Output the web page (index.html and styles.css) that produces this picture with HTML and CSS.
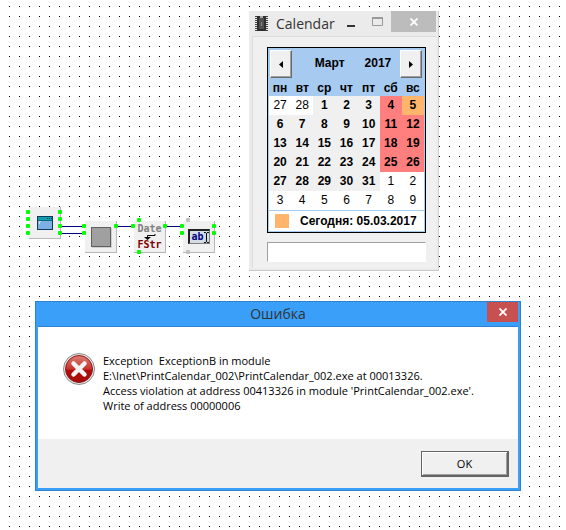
FILE: index.html
```
<!DOCTYPE html>
<html lang="ru">
<head>
    <meta charset="UTF-8">
    <meta name="viewport" content="width=device-width, initial-scale=1.0">
    <title>Calendar</title>
    <link rel="stylesheet" href="styles.css">
</head>
<body>
    <main class="desktop">
        <!-- Wires between the components -->
        <svg class="wires" width="200" height="60" viewBox="20 200 200 60" shape-rendering="crispEdges" aria-hidden="true">
            <path d="M60 226.500H84M60 233.500H84M116 226.500H133M165 226.500H182" stroke="#000080" fill="none"/>
        </svg>

        <div class="node node-form">
            <svg class="node-icon" width="16" height="14" viewBox="0 0 16 14" aria-hidden="true">
                <rect x=".5" y=".5" width="15" height="13" fill="#7db0e4" stroke="#123a5c"/>
                <rect x="1" y="1" width="14" height="3" fill="#12a0b0"/>
                <path d="M10 2.500h1M12 2.500h1M14 2.500h1" stroke="#064a58"/>
                <path d="M1 4.500h14" stroke="#0a6878"/>
                <path d="M2 5.500h2M2.500 5v3" stroke="#c4e2fa"/>
            </svg>
            <i class="pin l p1"></i><i class="pin l p2"></i><i class="pin l p3"></i><i class="pin l p4"></i>
            <i class="pin r p1"></i><i class="pin r p2"></i><i class="pin r p3"></i><i class="pin r p4"></i>
        </div>

        <div class="node node-button">
            <span class="square"></span>
            <i class="pin l p1"></i><i class="pin l p2"></i><i class="pin r p1"></i>
        </div>

        <div class="node node-date">
            <span class="date-text">Date</span>
            <svg width="12" height="6" viewBox="0 0 12 6" aria-hidden="true">
                <path d="M11 0v1.500H3.500V4" fill="none" stroke="#000"/>
                <path d="M0 3h7L3.500 6z"/>
            </svg>
            <span class="fstr-text">FStr</span>
            <i class="pin t"></i><i class="pin l p1"></i><i class="pin r p1"></i><i class="pin b"></i>
        </div>

        <div class="node node-edit">
            <span class="edit-box">ab<svg width="5" height="11" viewBox="0 0 5 11" aria-hidden="true"><path d="M0 .5h2M3 .5h2M2.500 1v9M0 10.500h2M3 10.500h2" stroke="#000"/></svg></span>
            <i class="pin t off"></i><i class="pin b off"></i>
            <i class="pin l p1"></i><i class="pin l p2"></i><i class="pin r p1"></i><i class="pin r p2"></i>
        </div>

        <section class="window">
            <header class="window-title">
                <svg class="chip" width="13" height="15" viewBox="0 0 13 15" aria-hidden="true">
                    <path d="M1 0v15M12 0v15" stroke="#444" stroke-width="2" stroke-dasharray="1 1"/>
                    <rect x="2" y="0" width="9" height="15" fill="#2e2e2e"/>
                    <rect x="4" y="2" width="5" height="11" fill="#505050"/>
                    <path d="M5 0h3v2H5z" fill="#aaa"/>
                    <path d="M6 6h1v4H6z" fill="#888"/>
                </svg>
                <h1>Calendar</h1>
                <button class="win-btn" aria-label="Свернуть">
                    <svg width="8" height="10" viewBox="0 0 8 10"><path d="M0 8h8v2H0z" fill="#333"/></svg>
                </button>
                <button class="win-btn" aria-label="Развернуть">
                    <svg width="11" height="9" viewBox="0 0 11 9"><path d="M.5 1.500h10v7H.5z" fill="none" stroke="#999"/><path d="M0 0h11v2H0z" fill="#999"/></svg>
                </button>
                <button class="win-btn win-close" aria-label="Закрыть">
                    <svg width="8" height="8" viewBox="0 0 8 8"><path d="M.5 .5l7 7M7.500 .5l-7 7" stroke="#fff" stroke-width="1.800"/></svg>
                </button>
            </header>
            <div class="window-body">
                <div class="calendar">
                    <div class="cal-head">
                        <button class="cal-nav" aria-label="Назад">
                            <svg width="4" height="7" viewBox="0 0 4 7"><path d="M4 0v7L0 3.500z"/></svg>
                        </button>
                        <span class="cal-month"><span>Март</span><span>2017</span></span>
                        <button class="cal-nav" aria-label="Вперёд">
                            <svg width="4" height="7" viewBox="0 0 4 7"><path d="M0 0v7L4 3.500z"/></svg>
                        </button>
                    </div>
                    <table>
                        <thead>
                            <tr><th>пн</th><th>вт</th><th>ср</th><th>чт</th><th>пт</th><th>сб</th><th>вс</th></tr>
                        </thead>
                        <tbody>
                            <tr><td class="other">27</td><td class="other">28</td><td>1</td><td>2</td><td>3</td><td class="weekend">4</td><td class="today">5</td></tr>
                            <tr><td>6</td><td>7</td><td>8</td><td>9</td><td>10</td><td class="weekend">11</td><td class="weekend">12</td></tr>
                            <tr><td>13</td><td>14</td><td>15</td><td>16</td><td>17</td><td class="weekend">18</td><td class="weekend">19</td></tr>
                            <tr><td>20</td><td>21</td><td>22</td><td>23</td><td>24</td><td class="weekend">25</td><td class="weekend">26</td></tr>
                            <tr><td>27</td><td>28</td><td>29</td><td>30</td><td>31</td><td class="other">1</td><td class="other">2</td></tr>
                            <tr><td class="other">3</td><td class="other">4</td><td class="other">5</td><td class="other">6</td><td class="other">7</td><td class="other">8</td><td class="other">9</td></tr>
                        </tbody>
                    </table>
                    <div class="cal-today"><span class="swatch"></span>Сегодня: 05.03.2017</div>
                </div>
                <input class="edit" type="text" aria-label="Дата">
            </div>
        </section>

        <section class="dialog" role="alertdialog" aria-labelledby="dialog-title">
            <header class="dialog-title">
                <h2 id="dialog-title">Ошибка</h2>
                <button class="dialog-close" aria-label="Закрыть">
                    <svg width="8" height="8" viewBox="0 0 8 8"><path d="M.5 .5l7 7M7.500 .5l-7 7" stroke="#fff" stroke-width="1.800"/></svg>
                </button>
            </header>
            <div class="dialog-body">
                <svg class="error-icon" width="32" height="32" viewBox="0 0 32 32" aria-hidden="true">
                    <defs>
                        <linearGradient id="red" x1="0" y1="0" x2="0" y2="1">
                            <stop offset="0" stop-color="#dc8078"/>
                            <stop offset=".5" stop-color="#c8322c"/>
                            <stop offset=".55" stop-color="#b00c0c"/>
                            <stop offset="1" stop-color="#a80a0a"/>
                        </linearGradient>
                    </defs>
                    <circle cx="16" cy="16" r="15.500" fill="#e8e8e8" stroke="#8c8c8c"/>
                    <circle cx="16" cy="16" r="13.500" fill="url(#red)" stroke="#8e1a18"/>
                    <path d="M10.500 10.500l11 11M21.500 10.500l-11 11" stroke="#f4f4f4" stroke-width="4.500" stroke-linecap="round"/>
                </svg>
                <p>Exception&nbsp; ExceptionB in module<br>E:\Inet\PrintCalendar_002\PrintCalendar_002.exe at 00013326.<br>Access violation at address 00413326 in module 'PrintCalendar_002.exe'.<br>Write of address 00000006</p>
            </div>
            <footer class="dialog-footer">
                <button class="ok">OK</button>
            </footer>
        </section>
    </main>
</body>
</html>
```
FILE: styles.css
```
* {
    box-sizing: border-box;
    margin: 0;
    padding: 0;
}

body {
    font-family: "Open Sans", "Noto Sans", sans-serif;
    color: #000;
}

button {
    display: flex;
    align-items: center;
    justify-content: center;
    border: 0;
    background: none;
    font-family: inherit;
}

.desktop {
    position: relative;
    min-height: 100vh;
    overflow: hidden;
    background-color: #fff;
    background-image:
        linear-gradient(#fff 9px, transparent 9px),
        linear-gradient(90deg, #fff 9px, #000 9px);
    background-size: 10px 10px;
    background-position: 0 -3px;
}

/* Components on the canvas */
.wires {
    position: absolute;
    left: 20px;
    top: 200px;
}

.node {
    position: absolute;
    top: 221px;
    width: 32px;
    height: 32px;
    display: flex;
    flex-direction: column;
    align-items: center;
    justify-content: center;
    background: #f0f0f0;
    border-right: 1px solid #b8b8b8;
    border-bottom: 1px solid #b8b8b8;
    font-family: "DejaVu Sans Mono", monospace;
    font-size: 10px;
    font-weight: bold;
    line-height: 10px;
}

.node-form {
    left: 29px;
    top: 207px;
}

.node-button {
    left: 85px;
}

.node-date {
    left: 134px;
}

.node-edit {
    left: 183px;
}

.pin {
    position: absolute;
    width: 4px;
    height: 4px;
    border-radius: 1px;
    background: #00ff00;
}

.pin.off {
    background: #c0c0c0;
}

.l { left: -3px; }
.r { left: 29px; }
.p1 { top: 3px; }
.p2 { top: 10px; }
.p3 { top: 17px; }
.p4 { top: 24px; }
.t { left: 3px; top: -3px; }
.b { left: 3px; top: 29px; }

.square {
    width: 20px;
    height: 20px;
    background: #a0a0a0;
    border: 1px solid #606060;
    box-shadow: 1px 1px 0 #d0d0d0;
}

.date-text {
    color: #808080;
}

.fstr-text {
    color: #800000;
}

.edit-box {
    display: flex;
    align-items: center;
    width: 22px;
    height: 15px;
    padding-left: 2px;
    background: #d4dce8;
    border: 2px solid #202020;
    border-right: 1px solid #808080;
    border-bottom: 1px solid #808080;
    color: #000080;
}

/* Calendar window */
.window {
    position: absolute;
    left: 249px;
    top: 11px;
    width: 190px;
    background: #ebebeb;
    border-right: 1px solid #d0d0d0;
    border-bottom: 1px solid #c8c8c8;
    padding: 0 2px 2px 3px;
}

.window-title {
    display: flex;
    align-items: center;
    height: 25px;
}

.chip {
    flex: none;
    margin: 0 8px 0 3px;
}

.window-title h1,
.dialog-title h2 {
    font-size: 14px;
    font-weight: normal;
    line-height: 24px;
    color: #333;
}

.window-title h1 {
    flex: 1;
}

.win-btn {
    flex: none;
    width: 27px;
    height: 21px;
    align-self: flex-start;
}

.win-close {
    width: 45px;
    background: #bcbcbc;
}

.window-body {
    display: flex;
    flex-direction: column;
    gap: 9px;
    padding: 10px 10px 6px 14px;
    background: #f0f0f0;
    border: 1px solid #dcdcdc;
    border-right: 0;
    border-bottom: 0;
}

.calendar {
    background: #fff;
    border: 1px solid #000;
    font-family: "Liberation Sans", Arial, sans-serif;
    font-size: 12px;
    font-weight: bold;
}

.cal-head {
    display: flex;
    justify-content: space-between;
    padding: 2px 3px 2px 2px;
    background: #a6caf0;
}

.cal-nav {
    width: 22px;
    height: 28px;
    background: #f0f0f0;
    border: 1px solid;
    border-color: #fff #696969 #696969 #fff;
    box-shadow: inset -1px -1px 0 #a0a0a0;
}

.cal-month {
    display: flex;
    align-items: center;
    gap: 20px;
    padding: 0 0 3px 14px;
}

.calendar table {
    width: 100%;
    border-collapse: separate;
    border-spacing: 0;
    border-left: 1px solid #a6caf0;
    border-right: 1px solid #a6caf0;
    table-layout: fixed;
}

.calendar th {
    height: 16px;
    background: #a6caf0;
    line-height: 16px;
}

.calendar td {
    height: 19px;
    background: #f0f0f0;
    text-align: center;
    line-height: 19px;
}

.calendar .other {
    background: #fff;
    font-weight: normal;
}

.calendar .weekend {
    background: #ff7f7f;
}

.calendar .today {
    background: #ffb56b;
}

.cal-today {
    display: flex;
    align-items: center;
    gap: 11px;
    height: 22px;
    padding-left: 6px;
    border: 1px solid #a6caf0;
    white-space: nowrap;
}

.swatch {
    flex: none;
    width: 14px;
    height: 14px;
    background: #ffb56b;
}

.edit {
    width: 100%;
    height: 20px;
    padding: 0 4px;
    background: #fff;
    border: 1px solid;
    border-color: #a0a0a0 #fff #fff #a0a0a0;
}

/* Error dialog */
.dialog {
    position: absolute;
    left: 35px;
    right: 45px;
    top: 301px;
    padding: 0 2px 2px;
    background: #3a9ff8;
    border: 1px solid #2f82cc;
}

.dialog-title {
    display: flex;
    align-items: flex-start;
    height: 25px;
    border-bottom: 1px solid #2f82cc;
}

.dialog-title h2 {
    flex: 1;
    padding-left: 31px;
    text-align: center;
}

.dialog-close {
    width: 31px;
    height: 20px;
    background: #c75050;
}

.dialog-body {
    display: flex;
    gap: 8px;
    padding: 26px 25px;
    background: #fff;
}

.dialog-body p {
    font-size: 11px;
    line-height: 15px;
}

.error-icon {
    flex: none;
}

.dialog-footer {
    display: flex;
    justify-content: flex-end;
    padding: 12px 9px 11px;
    background: #f0f0f0;
}

.ok {
    width: 88px;
    height: 26px;
    background: #f0f0f0;
    border: 1px solid #646464;
    border-right-width: 2px;
    border-bottom-width: 2px;
    box-shadow: inset 1px 1px 0 #fff, inset -1px -1px 0 #a0a0a0;
    font-size: 11px;
}
```
